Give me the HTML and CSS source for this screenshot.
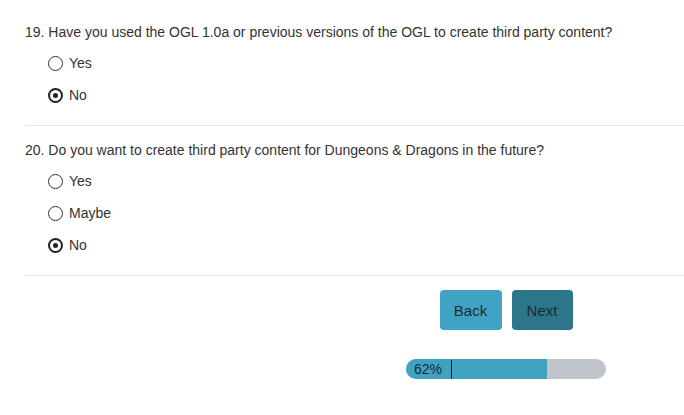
FILE: index.html
```html
<!DOCTYPE html>
<html>
<head>
<meta charset="utf-8">
<link rel="stylesheet" href="styles.css">
</head>
<body>
<div class="survey">
  <div class="question">
    <div class="q-title">19. Have you used the OGL 1.0a or previous versions of the OGL to create third party content?</div>
    <div class="options">
      <label class="option"><span class="radio"></span><span class="opt-text">Yes</span></label>
      <label class="option"><span class="radio checked"></span><span class="opt-text">No</span></label>
    </div>
  </div>
  <div class="question">
    <div class="q-title">20. Do you want to create third party content for Dungeons &amp; Dragons in the future?</div>
    <div class="options">
      <label class="option"><span class="radio"></span><span class="opt-text">Yes</span></label>
      <label class="option"><span class="radio"></span><span class="opt-text">Maybe</span></label>
      <label class="option"><span class="radio checked"></span><span class="opt-text">No</span></label>
    </div>
  </div>
  <div class="footer">
    <div class="buttons">
      <button class="btn btn-back">Back</button>
      <button class="btn btn-next">Next</button>
    </div>
    <div class="progress">
      <div class="progress-fill" style="width: 141px"></div>
      <span class="progress-label">62%</span>
      <span class="progress-marker"></span>
    </div>
  </div>
</div>
</body>
</html>
```
FILE: styles.css
```css
html, body {
  margin: 0;
  padding: 0;
  background: #ffffff;
}
body {
  font-family: "Liberation Sans", Arial, sans-serif;
  font-size: 14px;
  color: #333333;
}
.survey {
  padding-top: 22px;
  padding-left: 25px;
}
.question {
  border-bottom: 1px solid #e8e8e8;
  padding-bottom: 14px;
  margin-bottom: 14px;
}
.q-title {
  line-height: 20px;
  height: 20px;
  white-space: nowrap;
}
.options {
  margin-top: 5px;
  padding-left: 23px;
  display: flex;
  flex-direction: column;
}
.option {
  display: flex;
  align-items: center;
  height: 32px;
}
.radio {
  box-sizing: border-box;
  width: 15px;
  height: 15px;
  border: 1.6px solid #2f3337;
  border-radius: 50%;
  display: flex;
  align-items: center;
  justify-content: center;
  margin-right: 6px;
}
.radio.checked {
  border-width: 2.2px;
  border-color: #1f2326;
}
.radio.checked::after {
  content: "";
  width: 5px;
  height: 5px;
  border-radius: 50%;
  background: #1f2326;
}
.opt-text {
  line-height: 20px;
}
.footer {
  display: flex;
  flex-direction: column;
  align-items: center;
  padding-left: 303px;
}
.buttons {
  display: flex;
  gap: 10px;
}
.btn {
  font-family: "Liberation Sans", Arial, sans-serif;
  font-size: 15px;
  color: #1b2a33;
  height: 40px;
  border: none;
  border-radius: 4px;
  padding: 0;
  cursor: pointer;
}
.btn-back {
  width: 62px;
  background: #40a3c3;
}
.btn-next {
  width: 61px;
  background: #2d7689;
}
.progress {
  position: relative;
  margin-top: 29px;
  width: 200px;
  height: 20px;
  border-radius: 10px;
  background: #c0c4cb;
  overflow: hidden;
}
.progress-fill {
  height: 100%;
  background: #3fa2c1;
}
.progress-label {
  position: absolute;
  left: 8px;
  top: 0;
  line-height: 20px;
  font-size: 14px;
  color: #1b2a33;
}
.progress-marker {
  position: absolute;
  left: 45px;
  top: 1px;
  width: 1px;
  height: 19px;
  background: #111;
}
```
